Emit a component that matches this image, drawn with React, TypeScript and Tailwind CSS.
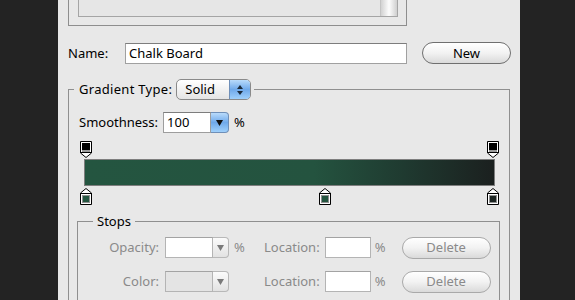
import { FC, ReactNode } from "react";

const font = { fontFamily: '"Noto Sans", "DejaVu Sans", sans-serif' };

const OpacityStop: FC<{ className: string }> = ({ className }) => (
  <svg
    className={`absolute top-0 ${className}`}
    width="12"
    height="17"
    viewBox="0 0 12 17"
  >
    <path d="M0.5 0.5H11.5V12L6 16.5L0.5 12Z" fill="#fff" stroke="#000" />
    <rect x="2" y="2" width="8" height="7" fill="#000" />
    <rect x="2" y="9" width="8" height="2" fill="#9a9a9a" />
    <line x1="0.5" y1="11.5" x2="11.5" y2="11.5" stroke="#000" />
  </svg>
);

const ColorStop: FC<{ className: string; color: string }> = ({
  className,
  color,
}) => (
  <svg
    className={`absolute top-0 ${className}`}
    width="12"
    height="17"
    viewBox="0 0 12 17"
  >
    <path d="M6 0.5L11.5 5V16.5H0.5V5Z" fill="#fff" stroke="#000" />
    <line x1="0.5" y1="5.5" x2="11.5" y2="5.5" stroke="#000" />
    <rect x="2" y="7" width="8" height="8" fill="#8f8f8f" />
    <rect x="3" y="8" width="6" height="6" fill={color} />
  </svg>
);

const PillButton: FC<{ children: ReactNode; disabled?: boolean }> = ({
  children,
  disabled,
}) => (
  <div
    className={`flex h-[22px] w-[89px] items-center justify-center rounded-full border bg-gradient-to-b from-white via-[#f2f2f2] to-[#dadada] text-[13px] ${
      disabled
        ? "border-[#a9a9a9] text-[#8a8a8a]"
        : "border-[#6f6f6f] text-[#000]"
    }`}
  >
    {children}
  </div>
);

const Arrow: FC<{ color?: string }> = ({ color = "#333" }) => (
  <svg width="7" height="6" viewBox="0 0 7 6">
    <path d="M0 0H7L3.5 6Z" fill={color} />
  </svg>
);

const DisabledCombo: FC<{ field: string }> = ({ field }) => (
  <div className="flex h-[21px] w-[64px]">
    <div
      className={`h-full w-[48px] border border-[#b4b4b4] border-t-[#a3a3a3] ${field}`}
    />
    <div className="flex h-full w-[16px] items-center justify-center rounded-r-[4px] border border-l-0 border-[#b8b8b8] bg-gradient-to-b from-[#fbfbfb] to-[#e2e2e2]">
      <Arrow color="#7a7a7a" />
    </div>
  </div>
);

const StopRow: FC<{ label: string; field: string }> = ({ label, field }) => (
  <div className="flex h-[21px] items-center text-[13px] text-[#8a8a8a]">
    <div className="w-[81px] text-right">{label}</div>
    <div className="ml-[6px]">
      <DisabledCombo field={field} />
    </div>
    {label === "Opacity:" ? (
      <div className="ml-[5px] w-[30px]">%</div>
    ) : (
      <div className="ml-[5px] w-[30px]" />
    )}
    <div>Location:</div>
    <div className="ml-[5px] h-[21px] w-[46px] border border-[#b4b4b4] border-t-[#a3a3a3] bg-white" />
    <div className="ml-[4px] w-[27px]">%</div>
    <PillButton disabled>Delete</PillButton>
  </div>
);

export default function App() {
  return (
    <div
      className="flex h-[300px] w-[575px] overflow-hidden bg-[#232323] leading-none"
      style={font}
    >
      <div className="ml-[58px] flex h-full w-[462px] flex-col bg-[#e8e8e8] pl-[10px] text-[#000]">
        {/* preset list, cut off at top */}
        <div className="h-[26px] w-[339px] shrink-0 border-x border-b border-[#8e8e8e] pl-[9px]">
          <div className="flex h-[17px] w-[320px] justify-end border-x border-b border-[#a5a5a5] bg-[#e6e6e6]">
            <div className="h-full w-[17px] border-l border-[#c4c4c4] bg-gradient-to-r from-[#d2d2d2] via-[#fdfdfd] to-[#cfcfcf]" />
          </div>
        </div>

        {/* name */}
        <div className="mt-[16px] flex h-[22px] items-center text-[13px]">
          <div className="w-[57px]">Name:</div>
          <div className="flex h-[21px] w-[282px] items-center border border-[#a0a0a0] border-t-[#7d7d7d] bg-white pl-[3px]">
            Chalk Board
          </div>
          <div className="ml-[15px]">
            <PillButton>New</PillButton>
          </div>
        </div>

        {/* gradient */}
        <fieldset className="mt-[15px] w-[442px] border border-b-0 border-[#8f8f8f] pb-[40px]">
          <legend className="ml-[5px] flex items-center pl-[5px] pr-[3px] text-[13px]">
            <span className="tracking-[0.3px]">Gradient Type:</span>
            <div className="ml-[4px] flex h-[21px] w-[75px] overflow-hidden rounded-[5px] border border-[#8a8a8a] bg-gradient-to-b from-white to-[#e4e4e4]">
              <div className="flex flex-1 items-center pl-[8px]">Solid</div>
              <div className="flex w-[21px] flex-col items-center justify-center gap-[2px] border-l border-[#6f8fb8] bg-gradient-to-b from-[#b9dbfb] via-[#6fa9ea] to-[#9fd0fb]">
                <svg width="6" height="4" viewBox="0 0 6 4">
                  <path d="M0 4H6L3 0Z" fill="#1b2a3a" />
                </svg>
                <svg width="6" height="4" viewBox="0 0 6 4">
                  <path d="M0 0H6L3 4Z" fill="#1b2a3a" />
                </svg>
              </div>
            </div>
          </legend>

          <div className="mt-[12px] flex h-[21px] items-center pl-[10px] text-[13px]">
            <div>Smoothness:</div>
            <div className="ml-[5px] flex h-[21px] w-[66px]">
              <div className="flex h-full w-[48px] items-center border border-[#9d9d9d] border-t-[#7d7d7d] bg-white pl-[3px]">
                100
              </div>
              <div className="flex h-full w-[18px] items-center justify-center rounded-r-[4px] border border-l-0 border-[#6f8fb8] bg-gradient-to-b from-[#b9dbfb] via-[#6fa9ea] to-[#9fd0fb]">
                <Arrow color="#111" />
              </div>
            </div>
            <div className="ml-[5px]">%</div>
          </div>

          <div className="ml-[15px] mt-[8px] w-[411px]">
            <div className="relative h-[17px]">
              <OpacityStop className="left-[-4px]" />
              <OpacityStop className="left-[403px]" />
            </div>
            <div className="mt-[1px] h-[27px] border border-[#7e7e7e] bg-[linear-gradient(to_right,#245540_0%,#24533f_56%,#1f3a30_78%,#1b201f_100%)]" />
            <div className="relative mt-[2px] h-[17px]">
              <ColorStop className="left-[-4px]" color="#245540" />
              <ColorStop className="left-[235px]" color="#245540" />
              <ColorStop className="left-[403px]" color="#1c2421" />
            </div>
          </div>

          {/* stops */}
          <fieldset className="ml-[8px] mt-[10px] w-[423px] border border-b-0 border-[#8f8f8f] pb-[20px]">
            <legend className="ml-[15px] px-[4px] text-[13px] text-[#000]">
              Stops
            </legend>
            <div className="mt-[9px] flex flex-col gap-[13px]">
              <StopRow label="Opacity:" field="bg-white" />
              <StopRow label="Color:" field="bg-[#e4e4e4]" />
            </div>
          </fieldset>
        </fieldset>
      </div>
    </div>
  );
}
